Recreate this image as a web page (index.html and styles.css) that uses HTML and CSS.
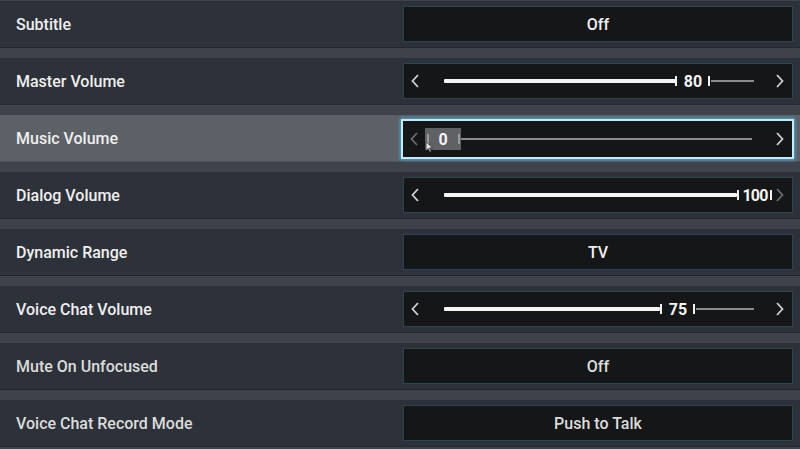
FILE: index.html
```html
<!DOCTYPE html>
<html lang="en">
<head>
    <meta charset="UTF-8">
    <meta name="viewport" content="width=device-width, initial-scale=1.0">
    <title>Audio Settings</title>
    <link rel="stylesheet" href="styles.css">
</head>
<body>
    <div class="settings">
        <div class="row">
            <div class="label">Subtitle</div>
            <div class="ctrl toggle">Off</div>
        </div>

        <div class="row">
            <div class="label">Master Volume</div>
            <div class="ctrl slider">
                <svg class="arrow" viewBox="0 0 8 14"><path d="M7 1 L1.5 7 L7 13"/></svg>
                <div class="track">
                    <span class="fill" style="width:233px"></span>
                    <span class="thumb" style="left:271px">80</span>
                    <span class="rest" style="left:307px;width:43px"></span>
                </div>
                <svg class="arrow" viewBox="0 0 8 14"><path d="M1 1 L6.5 7 L1 13"/></svg>
            </div>
        </div>

        <div class="row active">
            <div class="label">Music Volume</div>
            <div class="ctrl slider focused">
                <svg class="arrow off" viewBox="0 0 8 14"><path d="M7 1 L1.5 7 L7 13"/></svg>
                <div class="track">
                    <span class="thumb grab" style="left:23px">0</span>
                    <span class="rest" style="left:59px;width:291px"></span>
                </div>
                <svg class="arrow" viewBox="0 0 8 14"><path d="M1 1 L6.5 7 L1 13"/></svg>
                <svg class="cursor" viewBox="0 0 10 14"><path d="M1 1 L1 11 L3.5 8.8 L5.5 13 L7 12.3 L5 8.2 L8.5 8 Z"/></svg>
            </div>
        </div>

        <div class="row">
            <div class="label">Dialog Volume</div>
            <div class="ctrl slider">
                <svg class="arrow" viewBox="0 0 8 14"><path d="M7 1 L1.5 7 L7 13"/></svg>
                <div class="track">
                    <span class="fill" style="width:293px"></span>
                    <span class="thumb tight" style="left:333px">100</span>
                </div>
                <svg class="arrow off" viewBox="0 0 8 14"><path d="M1 1 L6.5 7 L1 13"/></svg>
            </div>
        </div>

        <div class="row">
            <div class="label">Dynamic Range</div>
            <div class="ctrl toggle">TV</div>
        </div>

        <div class="row">
            <div class="label">Voice Chat Volume</div>
            <div class="ctrl slider">
                <svg class="arrow" viewBox="0 0 8 14"><path d="M7 1 L1.5 7 L7 13"/></svg>
                <div class="track">
                    <span class="fill" style="width:216px"></span>
                    <span class="thumb" style="left:256px">75</span>
                    <span class="rest" style="left:292px;width:58px"></span>
                </div>
                <svg class="arrow" viewBox="0 0 8 14"><path d="M1 1 L6.5 7 L1 13"/></svg>
            </div>
        </div>

        <div class="row dim">
            <div class="label">Mute On Unfocused</div>
            <div class="ctrl toggle">Off</div>
        </div>

        <div class="row dim">
            <div class="label">Voice Chat Record Mode</div>
            <div class="ctrl toggle">Push to Talk</div>
        </div>
    </div>
</body>
</html>
```

FILE: styles.css
```css
body {
    margin: 0;
    background-color: #3e434b;
    font-family: Roboto, "Liberation Sans", sans-serif;
    color: #efefef;
    overflow: hidden;
}
.settings {
    display: flex;
    flex-direction: column;
    gap: 10px;
    padding-top: 1px;
}
.row {
    display: flex;
    align-items: center;
    height: 47px;
    background-color: #2d3139;
    border-bottom: 1px solid #24272d;
    box-sizing: border-box;
}
.row.active {
    background-color: #5c6067;
    border-bottom-color: #4c5057;
}
.row.dim .label,
.row.dim .ctrl {
    color: #dcdcdc;
}
.label {
    flex: 1;
    padding-left: 16px;
    font-size: 16px;
    font-weight: 500;
}
.ctrl {
    position: relative;
    width: 390px;
    height: 36px;
    margin-right: 7px;
    box-sizing: border-box;
    background-color: #151617;
    border: 1px solid #2a4650;
    font-size: 16px;
    font-weight: 500;
}
.toggle {
    display: flex;
    align-items: center;
    justify-content: center;
}
.slider {
    display: flex;
    align-items: center;
    justify-content: space-between;
    padding: 0 8px 0 7px;
}
.slider.focused {
    height: 40px;
    width: 393px;
    margin-right: 6px;
    margin-top: 2px;
    border: 2px solid #c4ecf8;
    box-shadow: 0 0 3px 1px #4aa6c8;
}
.arrow {
    position: relative;
    z-index: 1;
    width: 8px;
    height: 14px;
    fill: none;
    stroke: #d0d0d0;
    stroke-width: 1.8;
}
.arrow.off {
    stroke: #6a6c70;
}
.track {
    position: absolute;
    inset: 0;
}
.fill {
    position: absolute;
    left: 40px;
    top: 50%;
    height: 4px;
    margin-top: -2px;
    background-color: #f4f4f4;
    border-radius: 1px;
}
.rest {
    position: absolute;
    top: 50%;
    height: 2px;
    margin-top: -1px;
    background-color: #8a8b8d;
}
.thumb {
    position: absolute;
    top: 50%;
    width: 36px;
    height: 20px;
    margin-top: -10px;
    display: flex;
    align-items: center;
    justify-content: center;
    font-size: 16px;
    font-weight: 700;
    color: #f4f4f4;
    box-sizing: border-box;
}
.thumb::before,
.thumb::after {
    content: "";
    position: absolute;
    top: 5px;
    width: 2px;
    height: 10px;
    background-color: #f0f0f0;
}
.thumb::before {
    left: 0;
}
.thumb::after {
    right: 1px;
}
.thumb.grab {
    left: 21px;
    height: 22px;
    margin-top: -11px;
    background-color: #5f6165;
}
.thumb.grab::before,
.thumb.grab::after {
    top: 6px;
    background-color: #9a9a9a;
}
.thumb.grab::before {
    left: 2px;
}
.thumb.tight {
    letter-spacing: -0.8px;
}
.focused .track {
    inset: -1px;
}
.cursor {
    position: absolute;
    left: 22px;
    top: 20px;
    width: 9px;
    height: 12px;
    fill: #e8e8e8;
    stroke: #222;
    stroke-width: 0.8;
    z-index: 2;
}
```
